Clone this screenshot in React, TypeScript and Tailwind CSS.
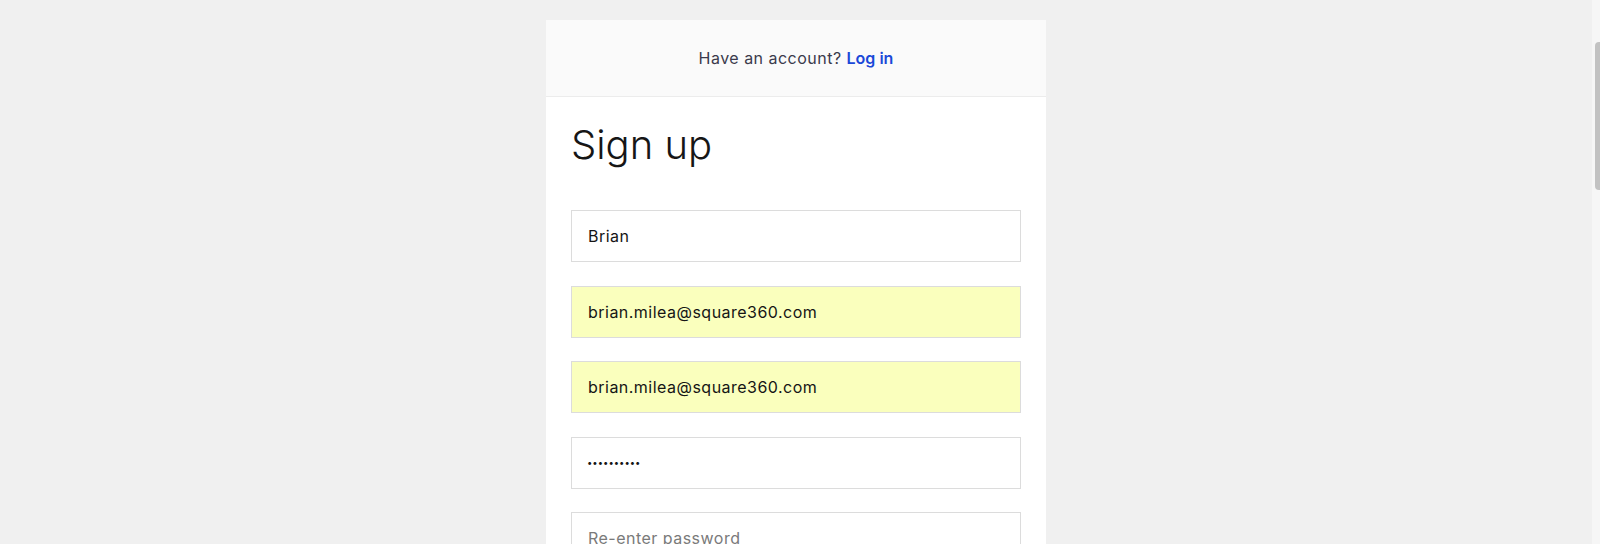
import { useState } from "react";

const FONT = "font-['Inter','Noto_Sans',sans-serif]";

type Field = { name: string; type: string; value: string; placeholder: string; autofilled?: boolean };

const FIELDS: Field[] = [
  { name: "name", type: "text", value: "Brian", placeholder: "Name" },
  { name: "email", type: "email", value: "brian.milea@square360.com", placeholder: "Email", autofilled: true },
  { name: "email2", type: "email", value: "brian.milea@square360.com", placeholder: "Confirm email", autofilled: true },
  { name: "password", type: "password", value: "square3600", placeholder: "Password" },
  { name: "password2", type: "password", value: "", placeholder: "Re-enter password" },
];

function SignupInput({ field }: { field: Field }) {
  const [value, setValue] = useState(field.value);
  const masked = field.type === "password" && value.length > 0;
  return (
    <input
      name={field.name}
      type={field.type}
      value={value}
      placeholder={field.placeholder}
      onChange={(e) => setValue(e.target.value)}
      className={`mb-[23.5px] block h-[52px] w-full border border-[#dcdcdc] px-4 text-[#151515] outline-none placeholder:text-[#7a7a7a] ${
        field.autofilled ? "bg-[#faffbd]" : "bg-white"
      } ${masked ? "pl-[15px] text-[9.5px] tracking-normal" : "text-[16px] tracking-[0.03em]"}`}
    />
  );
}

export default function App() {
  return (
    <div className={`relative h-screen overflow-hidden bg-[#f0f0f0] pr-2 ${FONT}`}>
      <div className="mx-auto mt-5 w-[500px] bg-white">
        <div className="flex h-[77px] items-center justify-center border-b border-[#ececec] bg-[#fafafa] text-[16px] tracking-[0.03em] text-[#3a3a4c]">
          <span>
            Have an account?{" "}
            <a href="#" className="font-semibold tracking-normal text-[#1a48d8]">
              Log in
            </a>
          </span>
        </div>
        <div className="px-[25px] pt-[24px] pb-8">
          <h1 className="mb-[41px] text-[40px] leading-[48px] font-light text-[#161616]">Sign up</h1>
          <form className="flex flex-col" onSubmit={(e) => e.preventDefault()}>
            {FIELDS.map((f) => (
              <SignupInput key={f.name} field={f} />
            ))}
            <button className="h-[52px] w-full bg-[#1a48d8] text-[16px] font-semibold text-white">Sign up</button>
          </form>
        </div>
      </div>

      {/* page scrollbar */}
      <div className="absolute top-0 right-0 h-full w-2 bg-[#f6f6f6]">
        <div className="absolute top-[42px] right-0 h-[148px] w-[5px] rounded-l-sm bg-[#c2c2c2]" />
      </div>
    </div>
  );
}
